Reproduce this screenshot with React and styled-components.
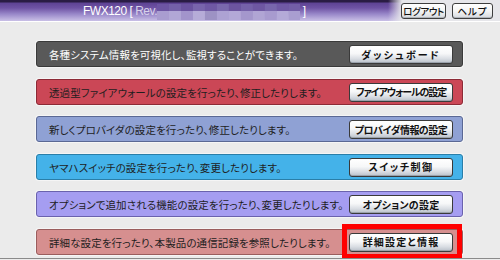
import React from "react";
import styled, { createGlobalStyle } from "styled-components";

const GlobalStyle = createGlobalStyle`
  html, body { margin: 0; padding: 0; background: #ebebeb; }
  body { font-family: "Noto Sans CJK JP", "Noto Sans", sans-serif; }
`;

const Page = styled.div`
  width: 500px;
  height: 258px;
  border-bottom: 1px solid #8a8a8a;
  background: #ebebeb;
  display: flex;
  flex-direction: column;
  overflow: hidden;
`;

const Header = styled.header`
  height: 21px;
  border-bottom: 1px solid #ffffff;
  display: flex;
  align-items: center;
  background:
    linear-gradient(to right, rgba(232, 232, 236, 0) 388px, #e6e6ea 402px),
    linear-gradient(to bottom, #2a1c44 0, #2a1c44 2px, #5e4394 3px, #6f53a4 8px, #9887c9 14px, #bcb0de 19px, #c9bfe6 21px);
  padding: 0 7px 0 83px;
`;

const Title = styled.span`
  font-family: "Liberation Sans", Arial, sans-serif;
  font-size: 12px;
  letter-spacing: -0.5px;
  color: #ffffff;
  white-space: pre;
`;

const RevLabel = styled.span`
  color: #d8d2ea;
`;

const Mosaic = styled.svg`
  display: block;
  width: 143px;
  height: 16px;
  margin-top: 2px;
`;

const Spacer = styled.div`
  flex: 1;
`;

const HeaderButtons = styled.div`
  display: flex;
  gap: 6px;
`;

const SmallButton = styled.button`
  width: ${(p) => p.$w}px;
  height: 16px;
  padding: 0;
  border: 1px solid #3e3e3e;
  border-radius: 3px;
  background: linear-gradient(to bottom, #ffffff 0%, #f4f4f4 50%, #d6d9de 100%);
  box-shadow: inset 0 -1px 0 #b0b4ba;
  font-family: "Noto Sans CJK JP", sans-serif;
  font-size: 9.5px;
  line-height: 14px;
  color: #111;
  font-weight: 500;
  letter-spacing: ${(p) => p.$ls || 0}px;
  white-space: nowrap;
  overflow: visible;
  font-feature-settings: "palt";
`;

const Main = styled.main`
  padding: 19px 37px 0 36px;
  display: flex;
  flex-direction: column;
  gap: 11.5px;
`;

const Row = styled.div`
  height: 26px;
  box-sizing: border-box;
  border: 1px solid ${(p) => p.$border};
  border-radius: 3px;
  background: ${(p) => p.$bg};
  box-shadow: 0 0 0 1px rgba(255, 255, 255, 0.5);
  display: flex;
  align-items: center;
  justify-content: space-between;
  padding: 1px 9px 0 12px;
`;

const RowText = styled.span`
  font-size: 10.5px;
  color: ${(p) => p.$color};
  font-feature-settings: "palt";
  letter-spacing: 0.1px;
  white-space: nowrap;
`;

const ButtonWrap = styled.span`
  position: relative;
  display: flex;
  flex-shrink: 0;
`;

const ActionButton = styled.button`
  width: 104px;
  height: 19px;
  padding: 0;
  border: 1px solid #3a3a3a;
  border-radius: 3px;
  background: linear-gradient(to bottom, #ffffff 0%, #f6f7f8 45%, #d9dde3 75%, #b9c0c9 100%);
  box-shadow: inset 0 -1px 0 #9aa2ac;
  font-family: "Noto Sans CJK JP", sans-serif;
  font-size: 10px;
  line-height: 16px;
  font-weight: 600;
  color: #111;
  white-space: nowrap;
  letter-spacing: ${(p) => p.$ls || 0}px;
  font-feature-settings: "palt";
`;

const Highlight = styled.span`
  position: absolute;
  top: -9px;
  left: -7px;
  right: -9px;
  bottom: -7px;
  border: 5px solid #ff0000;
  pointer-events: none;
`;

const rows = [
  { text: "各種システム情報を可視化し、監視することができます。", button: "ダッシュボード", bg: "#595959", border: "#3a3a3a", color: "#ffffff", ls: 2.2 },
  { text: "透過型ファイアウォールの設定を行ったり、修正したりします。", button: "ファイアウォールの設定", bg: "#cb4756", border: "#8c2a36", color: "#1e1e1e", ls: -1.1 },
  { text: "新しくプロバイダの設定を行ったり、修正したりします。", button: "プロバイダ情報の設定", bg: "#8fa1d4", border: "#5a6894", color: "#1e1e1e", ls: -0.5 },
  { text: "ヤマハスイッチの設定を行ったり、変更したりします。", button: "スイッチ制御", bg: "#44b2e9", border: "#2a7ea8", color: "#1e1e1e", ls: 1.5 },
  { text: "オプションで追加される機能の設定を行ったり、変更したりします。", button: "オプションの設定", bg: "#a59df1", border: "#6a62ad", color: "#1e1e1e", ls: 0.2 },
  { text: "詳細な設定を行ったり、本製品の通信記録を参照したりします。", button: "詳細設定と情報", bg: "#d68f8f", border: "#9a5d5d", color: "#1e1e1e", ls: 1.2, highlight: true },
];

const mosaicTop = ["#6d55a3", "#7460a8", "#6a529f", "#7864ab", "#6f58a4", "#7a68ad", "#6c549f", "#7561a9", "#6e57a2", "#7866ac", "#7059a5", "#735ea7"];
const mosaicBottom = ["#a99dd0", "#b1a7d6", "#a294cb", "#b6acd8", "#9d92c4", "#ada2d3", "#b3a8d7", "#a497cc", "#b0a5d4", "#a89bcf", "#b4aad8", "#a99ed0"];

function MosaicBlur() {
  return (
    <Mosaic viewBox="0 0 148 16" preserveAspectRatio="none">
      {mosaicTop.map((c, i) => (
        <rect key={"t" + i} x={i * 12.4} y={0} width={12.5} height={7} fill={c} />
      ))}
      {mosaicBottom.map((c, i) => (
        <rect key={"b" + i} x={i * 12.4} y={7} width={12.5} height={9} fill={c} />
      ))}
    </Mosaic>
  );
}

export default function App() {
  return (
    <>
      <GlobalStyle />
      <Page>
        <Header>
          <Title>
            FWX120 [ <RevLabel>Rev.</RevLabel>
          </Title>
          <MosaicBlur />
          <Title> ]</Title>
          <Spacer />
          <HeaderButtons>
            <SmallButton $w={45} $ls={-0.4}>ログアウト</SmallButton>
            <SmallButton $w={41} $ls={1}>ヘルプ</SmallButton>
          </HeaderButtons>
        </Header>
        <Main>
          {rows.map((r) => (
            <Row key={r.button} $bg={r.bg} $border={r.border}>
              <RowText $color={r.color}>{r.text}</RowText>
              <ButtonWrap>
                <ActionButton $ls={r.ls}>{r.button}</ActionButton>
                {r.highlight && <Highlight />}
              </ButtonWrap>
            </Row>
          ))}
        </Main>
      </Page>
    </>
  );
}
